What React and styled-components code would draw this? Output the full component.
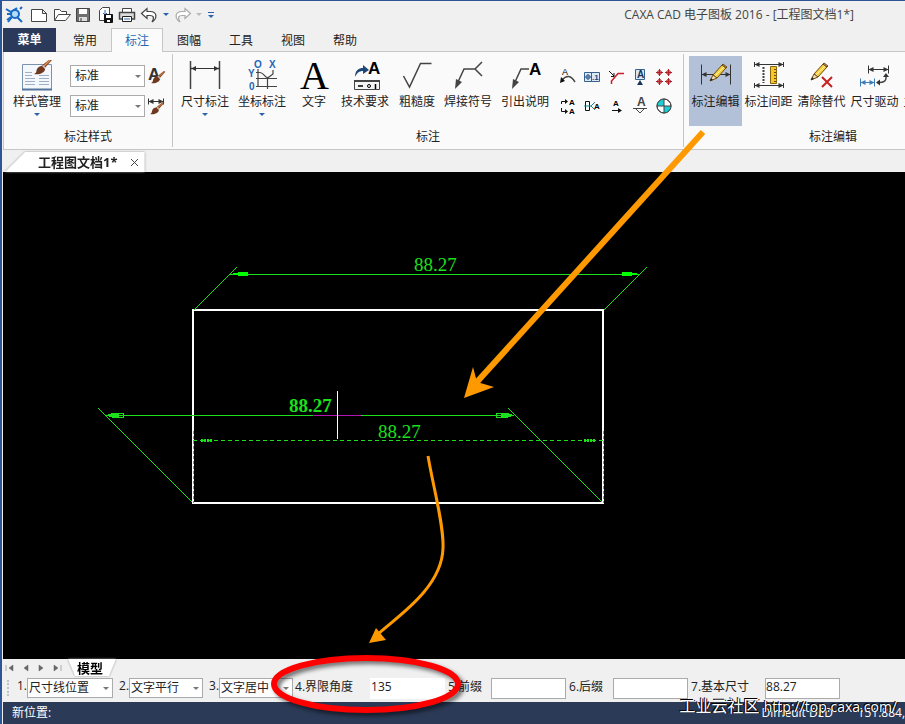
import styled, { createGlobalStyle } from 'styled-components';

const GlobalStyle = createGlobalStyle`
* {
  box-sizing: border-box;
}
body {
  margin: 0;
}
body, button, input, select {
  font-family: "Open Sans", "Noto Sans CJK SC", sans-serif;
  font-size: 12px;
  line-height: 16px;
  color: #222;
}
button {
  border: 0;
  background: none;
  padding: 0;
}
svg {
  display: block;
}
`

const Window = styled.div`
position: relative;
display: flex;
flex-direction: column;
min-height: 100vh;
overflow: hidden;
background: #f0f0f0;
border-top: 1px solid #2b579a;
border-left: 2px solid #2b579a;
padding-left: 1px;
`

const TitleBar = styled.header`
display: flex;
align-items: center;
height: 27px;
h1 {
  margin: 0 51px 0 auto;
  font-size: 12px;
  font-weight: 400;
  color: #444;
  white-space: nowrap;
}
`

const QuickButton = styled.button`
display: flex;
justify-content: center;
flex: none;
width: ${props => props.$width || 22}px;
`

const TabBar = styled.nav`
display: flex;
height: 24px;
position: relative;
margin-bottom: -1px;
`

const MenuButton = styled.button`
width: 53px;
background: #2b3a5a;
color: #fff;
font-weight: 600;
`

const RibbonTab = styled.button`
width: 52px;
border: 1px solid transparent;
border-bottom: 0;
&:nth-child(2) {
  margin-left: 3px;
}
${props => props.$active && `
  background: #fbfbfb;
  border-color: #c6c6c6;
  color: #2467b5;
`}
`

const Ribbon = styled.section`
display: flex;
background: #fafafa;
border: 1px solid #c6c6c6;
border-width: 1px 0 1px 1px;
padding: 2px 0;
overflow: hidden;
`

const Group = styled.div`
display: flex;
flex-direction: column;
flex: none;
border-right: 1px solid #c6c6c6;
padding-top: 2px;
h2 {
  margin: 0;
  padding: 3px 0 2px;
  font-size: 12px;
  font-weight: 400;
  text-align: center;
}
`

const Tools = styled.div`
display: flex;
height: 70px;
padding: 0 ${props => props.$right}px 0 ${props => props.$left}px;
`

const LargeButton = styled.button`
display: flex;
flex-direction: column;
align-items: center;
width: ${props => props.$width || 53}px;
padding-top: 4px;
white-space: nowrap;
background: ${props => props.$active ? '#b2c0d8' : 'none'};
span {
  margin-top: 2px;
}
`

const Caret = styled.i`
width: 0;
height: 0;
border: 3px solid transparent;
border-top-color: ${props => props.$color || '#2b62b0'};
border-bottom: 0;
margin-top: ${props => props.$top || 0}px;
`

const StyleList = styled.div`
display: flex;
flex-direction: column;
gap: 8px;
padding: 9px 0 0 5px;
`

const StyleRow = styled.div`
display: flex;
align-items: center;
gap: 3px;
`

const SelectBox = styled.div`
display: grid;
align-items: center;
width: ${props => props.$width}px;
height: ${props => props.$height}px;
select, i {
  grid-area: 1 / 1;
}
select {
  appearance: none;
  width: 100%;
  height: 100%;
  padding: 0 ${props => props.$pad}px;
  background: #fff;
  border: 1px solid #ababab;
  border-radius: 0;
}
i {
  justify-self: end;
  margin-right: 4px;
  pointer-events: none;
}
`

const SmallGrid = styled.div`
display: grid;
grid-template-columns: repeat(5, 24px);
grid-auto-rows: 29px;
padding: 6px 0 0 1px;
button {
  display: grid;
  place-items: center;
}
`

const DocTabs = styled.div`
display: flex;
height: 22px;
padding: 2px 0 0 2px;
`

const Outline = styled.div`
filter: drop-shadow(0 0 1px #999);
`

const DocTab = styled.div`
display: flex;
align-items: center;
height: 20px;
gap: 12px;
padding: 0 6px 0 33px;
background: #fff;
clip-path: polygon(0 100%, 20px 0, 100% 0, 100% 100%);
font-size: 13px;
font-weight: 700;
`

const Canvas = styled.main`
flex: 1;
display: flex;
background: #000;
svg {
  width: 100%;
  min-height: 400px;
}
text {
  font-family: "Liberation Sans Narrow", "Liberation Serif", serif;
  font-size: 19px;
  fill: #1be01b;
}
`

const SheetBar = styled.div`
display: flex;
align-items: center;
height: 17px;
padding-left: 1px;
`

const SheetNav = styled.button`
display: grid;
place-items: center start;
width: 16px;
`

const SheetTab = styled.button`
display: block;
height: 17px;
width: 48px;
padding-right: 4px;
background: #fff;
clip-path: polygon(0 0, 100% 0, 41px 100%, 7px 100%);
color: #000;
font-size: 13px;
font-weight: 700;
`

const OptionBar = styled.form`
display: flex;
align-items: center;
height: 26px;
padding: 0 0 2px 4px;
white-space: nowrap;
overflow: hidden;
`

const Grip = styled.span`
width: 2px;
height: 16px;
margin-right: 8px;
border-left: 2px dotted #b8c4d2;
`

const Choice = styled.label`
display: flex;
margin-right: ${props => props.$gap}px;
`

const Field = styled.label`
display: flex;
align-items: center;
margin-right: 3px;
span {
  width: ${props => props.$label}px;
  padding-bottom: 2px;
}
input {
  width: 75px;
  height: 21px;
  padding: 0 0 3px;
  background: #fff;
  border: 1px solid ${props => props.$plain ? '#fff' : '#ababab'};
  border-radius: 0;
}
`

const StatusBar = styled.footer`
display: flex;
align-items: center;
height: 22px;
padding-left: 9px;
background: #2b3a57;
color: #fff;
white-space: nowrap;
overflow: hidden;
span:nth-child(2) {
  margin-left: auto;
  width: 96px;
}
`

const Markup = styled.svg`
position: absolute;
top: -1px;
left: -2px;
pointer-events: none;
.ring {
  filter: drop-shadow(3px 3px 2px rgba(0, 0, 0, 0.55));
}
`

const Watermark = styled.p`
position: absolute;
right: 8px;
bottom: 7px;
margin: 0;
color: #fff;
font-size: 16px;
line-height: 20px;
text-shadow: -1px -1px 0 #000, 1px 0 0 #000;
white-space: nowrap;
pointer-events: none;
span {
  font-size: 14px;
}
`

const Icon = ({ size = 32, children }) => (
  <svg width={size} height={size} viewBox={`0 0 ${size} ${size}`} fill="none" stroke="#444" aria-hidden="true">
    {children}
  </svg>
)

const Letter = ({ x, y, size, color = '#000', serif, weight = 700, children }) => (
  <text x={x} y={y} fontSize={size} fontWeight={weight} fill={color} stroke="none"
    fontFamily={serif ? 'Liberation Serif, serif' : 'Liberation Sans, sans-serif'}>{children}</text>
)

// double ended dimension line with end ticks
const Span = ({ x1, x2, y, tick = 3, color = '#333' }) => (
  <g stroke={color}>
    <path d={`M${x1} ${y}H${x2}M${x1} ${y - tick}V${y + tick}M${x2} ${y - tick}V${y + tick}`} />
    <path fill={color} stroke="none" d={`M${x1} ${y}l5 -2.5v5zM${x2} ${y}l-5 -2.5v5z`} />
  </g>
)

const Pencil = ({ x, y }) => (
  <g transform={`translate(${x} ${y})`} stroke="#6b4a12">
    <path fill="#f7cf3c" d="M4 11L13 1L17 4L8 14Z" />
    <path fill="#f3dcae" d="M4 11L1 17L8 14Z" />
    <path fill="#d99b86" d="M13 1L14 0L18 3L17 4Z" />
    <path stroke="#fff4a8" d="M6 12L15 3" />
    <path fill="#222" stroke="none" d="M1 17l1-3l2 2z" />
  </g>
)

const Brush = ({ x, y, scale = 1 }) => (
  <g transform={`translate(${x} ${y}) scale(${scale})`} stroke="none">
    <path fill="#8a3f1c" d="M16 0l2 1L9 11L6 8Z" />
    <path stroke="#e09a60" strokeWidth="1.2" d="M16 1L8 9" />
    <path fill="#c8c8c8" d="M9 6l3 3l-2 2l-3-3z" />
    <path fill="#70381f" d="M8 7l3 3c0 4-6 6-11 5c3-1 2-3 3-5c1-2 3-3 5-3z" />
  </g>
)

const StyleIcon = () => (
  <Icon>
    <path fill="#f4f8fd" stroke="#7a93ad" d="M1.500 4.500H30.500V29.500H1.500Z" />
    <path stroke="#55749b" strokeWidth="2" d="M1 29.500H31" />
    <path stroke="#9fb0c6" d="M4 12.500H11M4 15.500H11M4 18.500H14M4 21.500H14M4 24.500H14M18 15.500H28M18 18.500H28M18 21.500H28M18 24.500H28" />
    <Brush x="13" y="-1" />
  </Icon>
)

const DimensionIcon = () => (
  <Icon><path strokeWidth="1.500" d="M1.500 1V29M30.500 1V29" /><Span x1={2} x2={30} y={8.5} tick={1} /></Icon>
)

const CoordIcon = () => (
  <Icon>
    <path strokeWidth="1.200" d="M12 9V27M10 12.500H14C19 13 19 20 23 17L27 14V10M10 18.500H31M10 26.500H31M21.500 18V29" />
    <Letter x={8} y={8} size={10} color="#2467b5">O</Letter>
    <Letter x={23} y={8} size={10} color="#2467b5">X</Letter>
    <Letter x={2} y={17} size={10} color="#2467b5">Y</Letter>
    <Letter x={3} y={30} size={10} color="#2467b5">0</Letter>
  </Icon>
)

const TextIcon = () => <Icon><Letter x={2} y={29} size={40} weight={400} serif>A</Letter></Icon>

const RequireIcon = () => (
  <Icon>
    <path fill="#1c4776" stroke="none" d="M6 17C6 10 10 8 14 8V5L20 10L14 14V11C10 11 8 13 6 17Z" />
    <Letter x={19} y={14} size={17}>A</Letter>
    <path fill="#f4f4f4" d="M5.500 20.500H30.500V29.500H5.500Z" />
    <path strokeWidth="2" d="M5 21H31" />
    <path stroke="#000" strokeWidth="1.500" d="M9 26H14M26.500 24V29" />
    <circle cx="20" cy="26" r="1.500" stroke="#000" />
  </Icon>
)

const RoughIcon = () => (
  <Icon><path strokeWidth="1.500" d="M2.500 16L8.500 27L19.500 3.500H30.500" /></Icon>
)

const leader = 'M3 29L4 19L10 22Z'

const WeldIcon = () => (
  <Icon>
    <path strokeWidth="1.500" d="M6 22L12 9H23L30 2M23 9L30 16" />
    <path fill="#444" stroke="none" d={leader} />
  </Icon>
)

const LeaderIcon = () => (
  <Icon>
    <path strokeWidth="1.500" d="M6 22L12 9H20" />
    <path fill="#444" stroke="none" d={leader} />
    <Letter x={20} y={15} size={17}>A</Letter>
  </Icon>
)

const EditIcon = () => (
  <Icon><Span x1={1.5} x2={30.5} y={14.5} tick={10} /><Pencil x={9} y={4} /></Icon>
)

const GapIcon = () => (
  <Icon>
    <Span x1={1.5} x2={30.5} y={4.5} tick={2.5} />
    <Span x1={1.5} x2={30.5} y={25.5} tick={2.5} />
    <path strokeWidth="2" strokeDasharray="2 1" d="M10.500 7V23" />
    <path fill="#f7c62b" stroke="#8a6510" d="M17.500 6.500H23.500V23.500H17.500Z" />
    <path stroke="#6b4a12" d="M21 9.500H23M21 12.500H23M21 15.500H23M21 18.500H23M21 21.500H23" />
  </Icon>
)

const ClearIcon = () => (
  <Icon>
    <Pencil x={4} y={3} />
    <path stroke="#c8201c" strokeWidth="2" d="M16 17L26 27M26 17L16 27" />
  </Icon>
)

const DriveIcon = () => (
  <Icon>
    <Span x1={9.5} x2={29.5} y={9.5} tick={4} />
    <Span x1={1.5} x2={15.5} y={22.5} tick={4} color="#3b7cb8" />
    <path strokeWidth="1.500" d="M27 16V18Q27 22.500 20 22.500" />
    <path fill="#333" stroke="none" d="M27 13l3 4h-6zM17 22.500l4-3v6z" />
  </Icon>
)

const SMALL = [
  ['圆弧标注', <><path strokeWidth="1.500" d="M3 12Q10 4 16 14" /><path fill="#111" stroke="none" d="M1 15l1-6l4 4z" /><Letter x={3} y={7} size={9} weight={400}>A</Letter></>],
  ['形位公差', <><path fill="#dce9f5" stroke="#35618f" d="M1.500 4.500H16.500V13.500H1.500ZM8.500 4V14" /><circle cx="5" cy="9" r="2" stroke="#35618f" /><path stroke="#35618f" d="M2 9H8M5 6V12" /><Letter x={9} y={12} size={8} color="#17477a">.1</Letter></>],
  ['倒角标注', <><path stroke="#d01c28" strokeWidth="1.500" d="M4.500 16V13L11 5.500H17" /><path stroke="#111" d="M2 3L7 8M7 5V8.500H4" /></>],
  ['基准代号', <><path fill="#dce9f5" stroke="#35618f" d="M4.500 1.500H13.500V11.500H4.500Z" /><Letter x={6} y={10} size={10} color="#17365c">A</Letter><path fill="#17365c" stroke="none" d="M9 12l3 5H6z" /></>],
  ['孔标注', [[4.5, 4.5], [13.5, 4.5], [4.5, 13.5], [13.5, 13.5]].map(([x, y]) => <g key={`${x}-${y}`} stroke="#b3222b"><circle cx={x} cy={y} r="2" fill="#f1c6c8" /><path d={`M${x - 3.5} ${y}h7M${x} ${y - 3.5}v7`} /></g>)],
  ['向视符号', <><path stroke="#111" d="M2.500 7V4.500H7M2.500 11V14.500H7" /><path fill="#111" stroke="none" d="M6 2l3 2.500l-3 2.500zM6 12l3 2.500l-3 2.500z" /><Letter x={10} y={8} size={8}>A</Letter><Letter x={10} y={17} size={8}>A</Letter></>],
  ['剖切符号', <><path stroke="#111" d="M2.500 4.500H6.500V13.500H2.500Z" /><path stroke="#1b8796" d="M1 9H8M12 5L8 9L12 13" /><Letter x={11} y={12} size={8}>A</Letter></>],
  ['旋转符号', <><Letter x={6} y={9} size={8}>A</Letter><path stroke="#111" d="M5 13.500H14" /><path fill="#111" stroke="none" d="M11 11l4 2.500l-4 2.500z" /></>],
  ['焊缝符号', <><Letter x={6} y={9} size={12} color="#444">A</Letter><path d="M2 11.500H16M5 12L9 16L13 12" /></>],
  ['圆心标记', <><circle cx="9" cy="9" r="7" fill="#fff" /><path fill="#19cfd6" stroke="none" d="M9 9V2A7 7 0 0 0 2 9ZM9 9V16A7 7 0 0 0 16 9Z" /><circle cx="9" cy="9" r="7" /><path d="M2 9H16M9 2V16" /></>],
]

const ANNOTATE = [
  ['尺寸标注', 56, DimensionIcon, true],
  ['坐标标注', 58, CoordIcon, true],
  ['文字', 46, TextIcon],
  ['技术要求', 56, RequireIcon],
  ['粗糙度', 48, RoughIcon],
  ['焊接符号', 54, WeldIcon],
  ['引出说明', 60, LeaderIcon],
]

const EDIT = [
  ['标注编辑', EditIcon],
  ['标注间距', GapIcon],
  ['清除替代', ClearIcon],
  ['尺寸驱动', DriveIcon],
  ['主动更新', Icon],
]

const QUICK = [
  ['CAXA', 22, <g key="i" stroke="#1769c5" strokeWidth="2"><path d="M1 3L6 6L12 2M2 8H6M2 14L6 11M15 3L17 1" /><circle cx="10" cy="8" r="4" fill="#b5dcf5" /><path d="M7 11L3 16M12 11L17 16" /></g>],
  ['新建', 27, <path key="i" fill="#fff" d="M1.500 3.500H12.500L16.500 7.500V15.500H1.500ZM12.500 3.500V7.500H16.500" />],
  ['打开', 20, <path key="i" fill="#fff" d="M1.500 14.500V3.500H6.500L8.500 5.500H13.500V8M1.500 14.500L5.500 8.500H17.500L12.500 14.500Z" />],
  ['保存', 22, <g key="i"><path fill="#6e6e6e" d="M2.500 2.500H15.500V15.500H2.500Z" /><path fill="#fff" stroke="none" d="M5 3H13V8H5Z" /><path fill="#ddd" stroke="none" d="M5 11H13V15H5Z" /><path stroke="#333" d="M7 12V15" /></g>],
  ['另存为', 22, <g key="i"><path fill="#fff" d="M3.500 14.500V4.500L6.500 1.500H13.500V8M3.500 14.500H8" /><path stroke="#2467b5" d="M9 4V9M7 7L9 9L11 7" /><path fill="#111" stroke="#111" d="M8.500 8.500H16.500V16.500H8.500Z" /><path fill="#fff" stroke="none" d="M10 9H15V12H10ZM11 14H14V16H11Z" /></g>],
  ['打印', 22, <g key="i"><path fill="#fff" d="M4.500 6V2.500H13.500V6" /><path fill="#ddd" strokeWidth="1.500" d="M1.500 6.500H16.500V13H1.500Z" /><path fill="#fff" stroke="#222" d="M4.500 10.500H13.500V15.500H4.500Z" /><path stroke="#2467b5" d="M6 13H12" /></g>],
  ['撤销', 22, <path key="i" fill="#fff" strokeWidth="1.200" d="M1.500 7.500L7 2.500V5.500H10C18 5.500 17 13 12 16C15 11 13 9.500 10 9.500H7V12.500Z" />],
  ['', 12, null, '#2b62b0'],
  ['重做', 21, <path key="i" fill="#fff" stroke="#aaa" strokeWidth="1.200" d="M16.500 7.500L11 2.500V5.500H8C0 5.500 1 13 6 16C3 11 5 9.500 8 9.500H11V12.500Z" />],
  ['', 12, null, '#bbb'],
]

const Drawing = () => (
  <svg aria-label="drawing">
    <g transform="translate(-3 -172)" fill="none" stroke="#1be01b" shapeRendering="crispEdges">
      <path stroke="#fff" strokeWidth="2" d="M193 310H603V503H193Z" />
      <path d="M193.500 310.500L236.500 267.500M603.500 310.500L646.500 267.500M230 274.500H640" />
      <path fill="#00ff00" stroke="none" d="M231 274L240 272H248V276H240ZM639 274L630 272H622V276H630Z" />
      <path d="M98.500 408.500L192.500 502.500M508.500 408.500L602.500 502.500M105 415.500H513" />
      <path d="M107 415.500L114 413.500H123.500V417.500H114ZM512 415.500L506 413.500H496.500V417.500H506Z" />
      <path fill="#1be01b" stroke="none" d="M107 415L112 413H119V417H112ZM513 415L508 413H501V417H508Z" />
      <path strokeDasharray="4 3" d="M193 440.500H603" />
      <path strokeDasharray="3 2" d="M193.500 431V503M603.500 431V503" />
      <path strokeWidth="3" strokeDasharray="2 1" d="M201 440.500H212M584 440.500H595" />
      <path stroke="#b414b4" d="M313 415.500H361" />
      <path stroke="#fff" d="M337.500 391V439" />
      <g stroke="none">
        <text x="414" y="271">88.27</text>
        <text x="289" y="412" fontWeight="700">88.27</text>
        <text x="378" y="438">88.27</text>
      </g>
    </g>
  </svg>
)

const Select = ({ label, value, width, height, pad }) => (
  <SelectBox $width={width} $height={height} $pad={pad}>
    <select aria-label={label} defaultValue={value}><option>{value}</option></select>
    <Caret $color="#777" />
  </SelectBox>
)

const NAV = ['M2 2V8M9 2L5 5L9 8Z', 'M8 2L4 5L8 8Z', 'M3 2L7 5L3 8Z', 'M2 2L6 5L2 8ZM9 2V8']

const App = () => {
  return (
    <>
      <GlobalStyle />
      <Window>
        <TitleBar>
          {QUICK.map(([name, width, icon, color], i) => (
            <QuickButton key={i} $width={width} aria-label={name || '更多'}>
              {color ? <Caret $color={color} /> : <Icon size={18}>{icon}</Icon>}
            </QuickButton>
          ))}
          <QuickButton $width={12} aria-label="自定义">
            <Icon size={8}><path stroke="#2b62b0" d="M1 1.500H7" /><path fill="#2b62b0" stroke="none" d="M1 4H7L4 7Z" /></Icon>
          </QuickButton>
          <h1>CAXA CAD 电子图板 2016 - [工程图文档1*]</h1>
        </TitleBar>
        <TabBar>
          <MenuButton>菜单</MenuButton>
          {['常用', '标注', '图幅', '工具', '视图', '帮助'].map(tab => (
            <RibbonTab key={tab} $active={tab === '标注'}>{tab}</RibbonTab>
          ))}
        </TabBar>
        <Ribbon>
          <Group>
            <Tools $left={5} $right={6}>
              <LargeButton $width={56}><StyleIcon /><span>样式管理</span><Caret $top={3} /></LargeButton>
              <StyleList>
                <StyleRow>
                  <Select label="文本样式" value="标准" width={75} height={22} pad={4} />
                  <Icon size={18}><Letter x={0} y={13} size={17} color="#333">A</Letter><Brush x="3" y="4" scale={0.8} /></Icon>
                </StyleRow>
                <StyleRow>
                  <Select label="尺寸样式" value="标准" width={75} height={22} pad={4} />
                  <Icon size={18}><Span x1={0.5} x2={15.5} y={4.5} /><Brush x="2" y="5" scale={0.8} /></Icon>
                </StyleRow>
              </StyleList>
            </Tools>
            <h2>标注样式</h2>
          </Group>
          <Group>
            <Tools $left={4} $right={7}>
              {ANNOTATE.map(([name, width, Glyph, more]) => (
                <LargeButton key={name} $width={width}>
                  <Glyph /><span>{name}</span>{more && <Caret $top={3} />}
                </LargeButton>
              ))}
              <SmallGrid>
                {SMALL.map(([name, glyph]) => (
                  <button key={name} aria-label={name}><Icon size={18}>{glyph}</Icon></button>
                ))}
              </SmallGrid>
            </Tools>
            <h2>标注</h2>
          </Group>
          <Group>
            <Tools $left={5} $right={28}>
              {EDIT.map(([name, Glyph], i) => (
                <LargeButton key={name} $active={i === 0}><Glyph /><span>{name}</span></LargeButton>
              ))}
            </Tools>
            <h2>标注编辑</h2>
          </Group>
        </Ribbon>
        <DocTabs>
          <Outline>
            <DocTab>
              工程图文档1*
              <button aria-label="关闭"><Icon size={9}><path d="M1 1L8 8M8 1L1 8" /></Icon></button>
            </DocTab>
          </Outline>
        </DocTabs>
        <Canvas><Drawing /></Canvas>
        <SheetBar>
          {NAV.map(d => (
            <SheetNav key={d} aria-label="翻页"><Icon size={10}><path fill="#666" stroke="#666" strokeWidth="0.500" d={d} /></Icon></SheetNav>
          ))}
          <Outline><SheetTab>模型</SheetTab></Outline>
        </SheetBar>
        <OptionBar>
          <Grip />
          <Choice $gap={6}>1.<Select label="尺寸线位置" value="尺寸线位置" width={86} height={20} pad={1} /></Choice>
          <Choice $gap={6}>2.<Select label="文字平行" value="文字平行" width={74} height={20} pad={1} /></Choice>
          <Choice $gap={2}>3.<Select label="文字居中" value="文字居中" width={74} height={20} pad={1} /></Choice>
          <Field $label={75} $plain><span>4.界限角度</span><input defaultValue="135" /></Field>
          <Field $label={43}><span>5.前缀</span><input /></Field>
          <Field $label={44}><span>6.后缀</span><input /></Field>
          <Field $label={74}><span>7.基本尺寸</span><input defaultValue="88.27" /></Field>
        </OptionBar>
        <StatusBar>
          <span>新位置:</span>
          <span>Dimedit DED</span>
          <span>151.884,</span>
        </StatusBar>
        <Markup width="905" height="724" fill="none" aria-hidden="true">
          <path stroke="#ff9900" strokeWidth="6" d="M703 132L476 383" />
          <path fill="#ff9900" d="M464 398L473 367L477 382L494 387Z" />
          <path stroke="#ff9900" strokeWidth="3" d="M428 456C433 486 444 525 443 548C442 590 392 620 376 636" />
          <path fill="#ff9900" d="M369 643L376 628L386 640Z" />
          <ellipse className="ring" cx="366" cy="684" rx="92" ry="26" stroke="#ff0000" strokeWidth="6" />
        </Markup>
        <Watermark>工业云社区 <span>http://top.caxa.com/</span></Watermark>
      </Window>
    </>
  )
}

export default App;
